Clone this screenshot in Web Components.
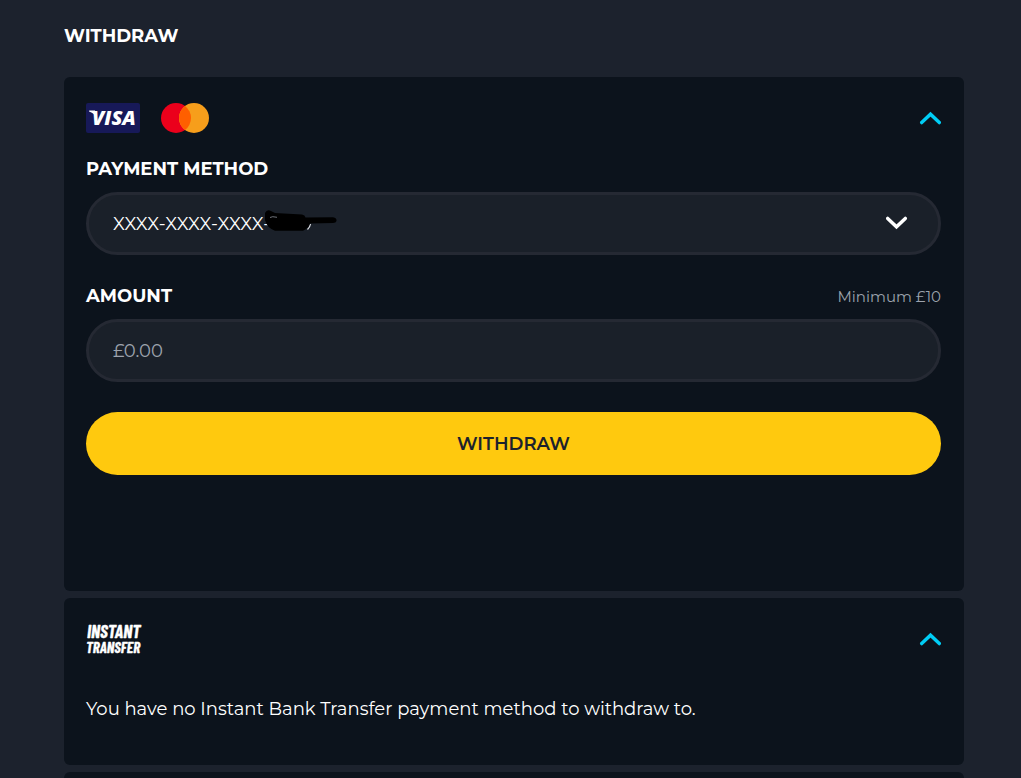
<!DOCTYPE html>
<html lang="en">
<head>
<meta charset="utf-8">
<meta name="viewport" content="width=device-width, initial-scale=1">
<title>Withdraw</title>
<style>
  body { margin: 0; background: #1c222d; color: #fff; font-family: Montserrat, Inter, "Open Sans", sans-serif; font-size: 18px; line-height: 24px; }
</style>
</head>
<body>
<withdraw-page></withdraw-page>

<script>
const define = (name, html, setup) => customElements.define(name, class extends HTMLElement {
  constructor() {
    super();
    this.attachShadow({ mode: 'open' }).innerHTML = html;
    if (setup) setup(this, this.shadowRoot);
  }
});

define('chevron-icon', `
  <style>
    :host { display: block; width: 22px; height: 14px; }
    svg { display: block; }
  </style>
  <svg width="22" height="14" viewBox="0 0 22 14" aria-hidden="true">
    <path d="M2.700 11.600 11.500 3.200 20.300 11.600" fill="none" stroke="currentColor" stroke-width="3.400" stroke-linecap="round"/>
  </svg>`);

define('visa-logo', `
  <style>
    :host, svg { display: block; }
    text { font: italic 800 20px "Open Sans", sans-serif; fill: #fff; }
  </style>
  <svg width="54" height="30" viewBox="0 0 54 30" role="img" aria-label="Visa">
    <rect width="54" height="30" rx="2" fill="#171958"/>
    <path d="M3.200 7.600H9L10.500 15.500Q8 9.800 3 8.600Z" fill="#fff"/>
    <text x="6" y="22">VISA</text>
  </svg>`);

define('mastercard-logo', `
  <style>:host, svg { display: block; }</style>
  <svg width="48" height="30" viewBox="0 0 48 30" role="img" aria-label="Mastercard">
    <circle cx="15" cy="15" r="15" fill="#eb001b"/>
    <circle cx="33" cy="15" r="15" fill="#f79e1b"/>
    <path d="M24 3a15 15 0 0 1 0 24a15 15 0 0 1 0-24Z" fill="#ff5f00"/>
  </svg>`);

define('instant-logo', `
  <style>
    :host, svg { display: block; }
    svg { overflow: visible; }
    text { font-family: "Barlow Condensed", "Open Sans Condensed", "Liberation Sans Narrow", "Liberation Sans", sans-serif; font-weight: 700; font-style: italic; fill: #fff; stroke: #fff; stroke-width: 0.3px; }
  </style>
  <svg width="60" height="34" viewBox="0 0 60 34">
    <text><tspan x="1" y="14" font-size="18">INSTANT</tspan><tspan x="0" y="29" font-size="15">TRANSFER</tspan></text>
  </svg>`);

define('method-card', `
  <style>
    :host { display: block; background: #0c131c; border-radius: 6px; padding: 26px 23px 44px 22px; }
    header { display: flex; align-items: center; justify-content: space-between; height: 30px; }
    .logos { display: flex; align-items: flex-start; gap: 21px; height: 30px; }
    button { border: 0; padding: 0; background: none; color: #00cdf5; cursor: pointer; }
  </style>
  <header>
    <div class="logos"><slot name="logo"></slot></div>
    <button type="button" aria-label="Toggle section" aria-expanded="true"><chevron-icon></chevron-icon></button>
  </header>
  <div class="body"><slot></slot></div>`,
  (host, root) => {
    const button = root.querySelector('button');
    const body = root.querySelector('.body');
    button.addEventListener('click', () => {
      body.hidden = !body.hidden;
      button.setAttribute('aria-expanded', String(!body.hidden));
    });
  });

define('withdraw-form', `
  <style>
    :host { display: block; padding: 24px 0 72px; }
    form { display: flex; flex-direction: column; }
    .row { display: flex; align-items: baseline; justify-content: space-between; height: 24px; margin-bottom: 11px; }
    label { font-size: 18px; font-weight: 700; }
    .hint { font-size: 15px; color: #9da3ad; font-weight: 400; }
    .field { position: relative; margin-bottom: 29px; }
    .field.last { margin-bottom: 30px; }
    select, input {
      display: block; box-sizing: border-box; width: 100%; height: 63px; margin: 0;
      padding: 0 24px; border: 3px solid #252933; border-radius: 32px; background: #1a2029;
      color: #fff; font: inherit; font-size: 18px; appearance: none; outline: none;
    }
    input::placeholder { color: #9da3ad; opacity: 1; }
    chevron-icon { position: absolute; right: 33px; top: 24px; transform: rotate(180deg); pointer-events: none; }
    .mark { position: absolute; left: 176px; top: 16px; pointer-events: none; }
    button {
      height: 63px; border: 0; border-radius: 32px; background: #ffc90e; color: #1c222d;
      font: inherit; font-size: 18px; font-weight: 600; cursor: pointer;
    }
  </style>
  <form>
    <div class="row"><label for="method">PAYMENT METHOD</label></div>
    <div class="field">
      <select id="method"><option>XXXX-XXXX-XXXX-</option></select>
      <svg class="mark" width="78" height="26" viewBox="0 0 78 26" aria-hidden="true">
        <path d="M48.500 16Q48 19 45.500 21.500" fill="none" stroke="#d8dade" stroke-width="1.300"/>
        <path d="M3 5Q5 1 9 3L13 5 40 6.500Q43 7 43.500 9.500L71 9.200Q75 10 74.500 13Q74 15 71 15L48 15.500Q46 21 41 22.700L13 22.700Q5 20 3 12Z" fill="#000"/>
        <path d="M8 9.500Q10 8 15 9.300" fill="none" stroke="#9da3ad" stroke-width="0.700"/>
      </svg>
      <chevron-icon></chevron-icon>
    </div>
    <div class="row"><label for="amount">AMOUNT</label><span class="hint">Minimum £10</span></div>
    <div class="field last"><input id="amount" type="text" inputmode="decimal" placeholder="£0.00"></div>
    <button type="submit">WITHDRAW</button>
  </form>`,
  (host, root) => root.querySelector('form').addEventListener('submit', e => e.preventDefault()));

define('withdraw-page', `
  <style>
    :host { display: block; box-sizing: border-box; height: 100vh; overflow: hidden auto; scrollbar-width: none; padding: 24px 57px 0 64px; }
    h1 { margin: 0 0 29px; font-size: 18px; line-height: 24px; font-weight: 700; }
    .cards { display: flex; flex-direction: column; gap: 7px; }
    p { margin: 43px 0 0; }
  </style>
  <main>
    <h1>WITHDRAW</h1>
    <div class="cards">
      <method-card>
        <visa-logo slot="logo"></visa-logo>
        <mastercard-logo slot="logo"></mastercard-logo>
        <withdraw-form></withdraw-form>
      </method-card>
      <method-card>
        <instant-logo slot="logo"></instant-logo>
        <p>You have no Instant Bank Transfer payment method to withdraw to.</p>
      </method-card>
      <method-card></method-card>
    </div>
  </main>`);
</script>
</body>
</html>
